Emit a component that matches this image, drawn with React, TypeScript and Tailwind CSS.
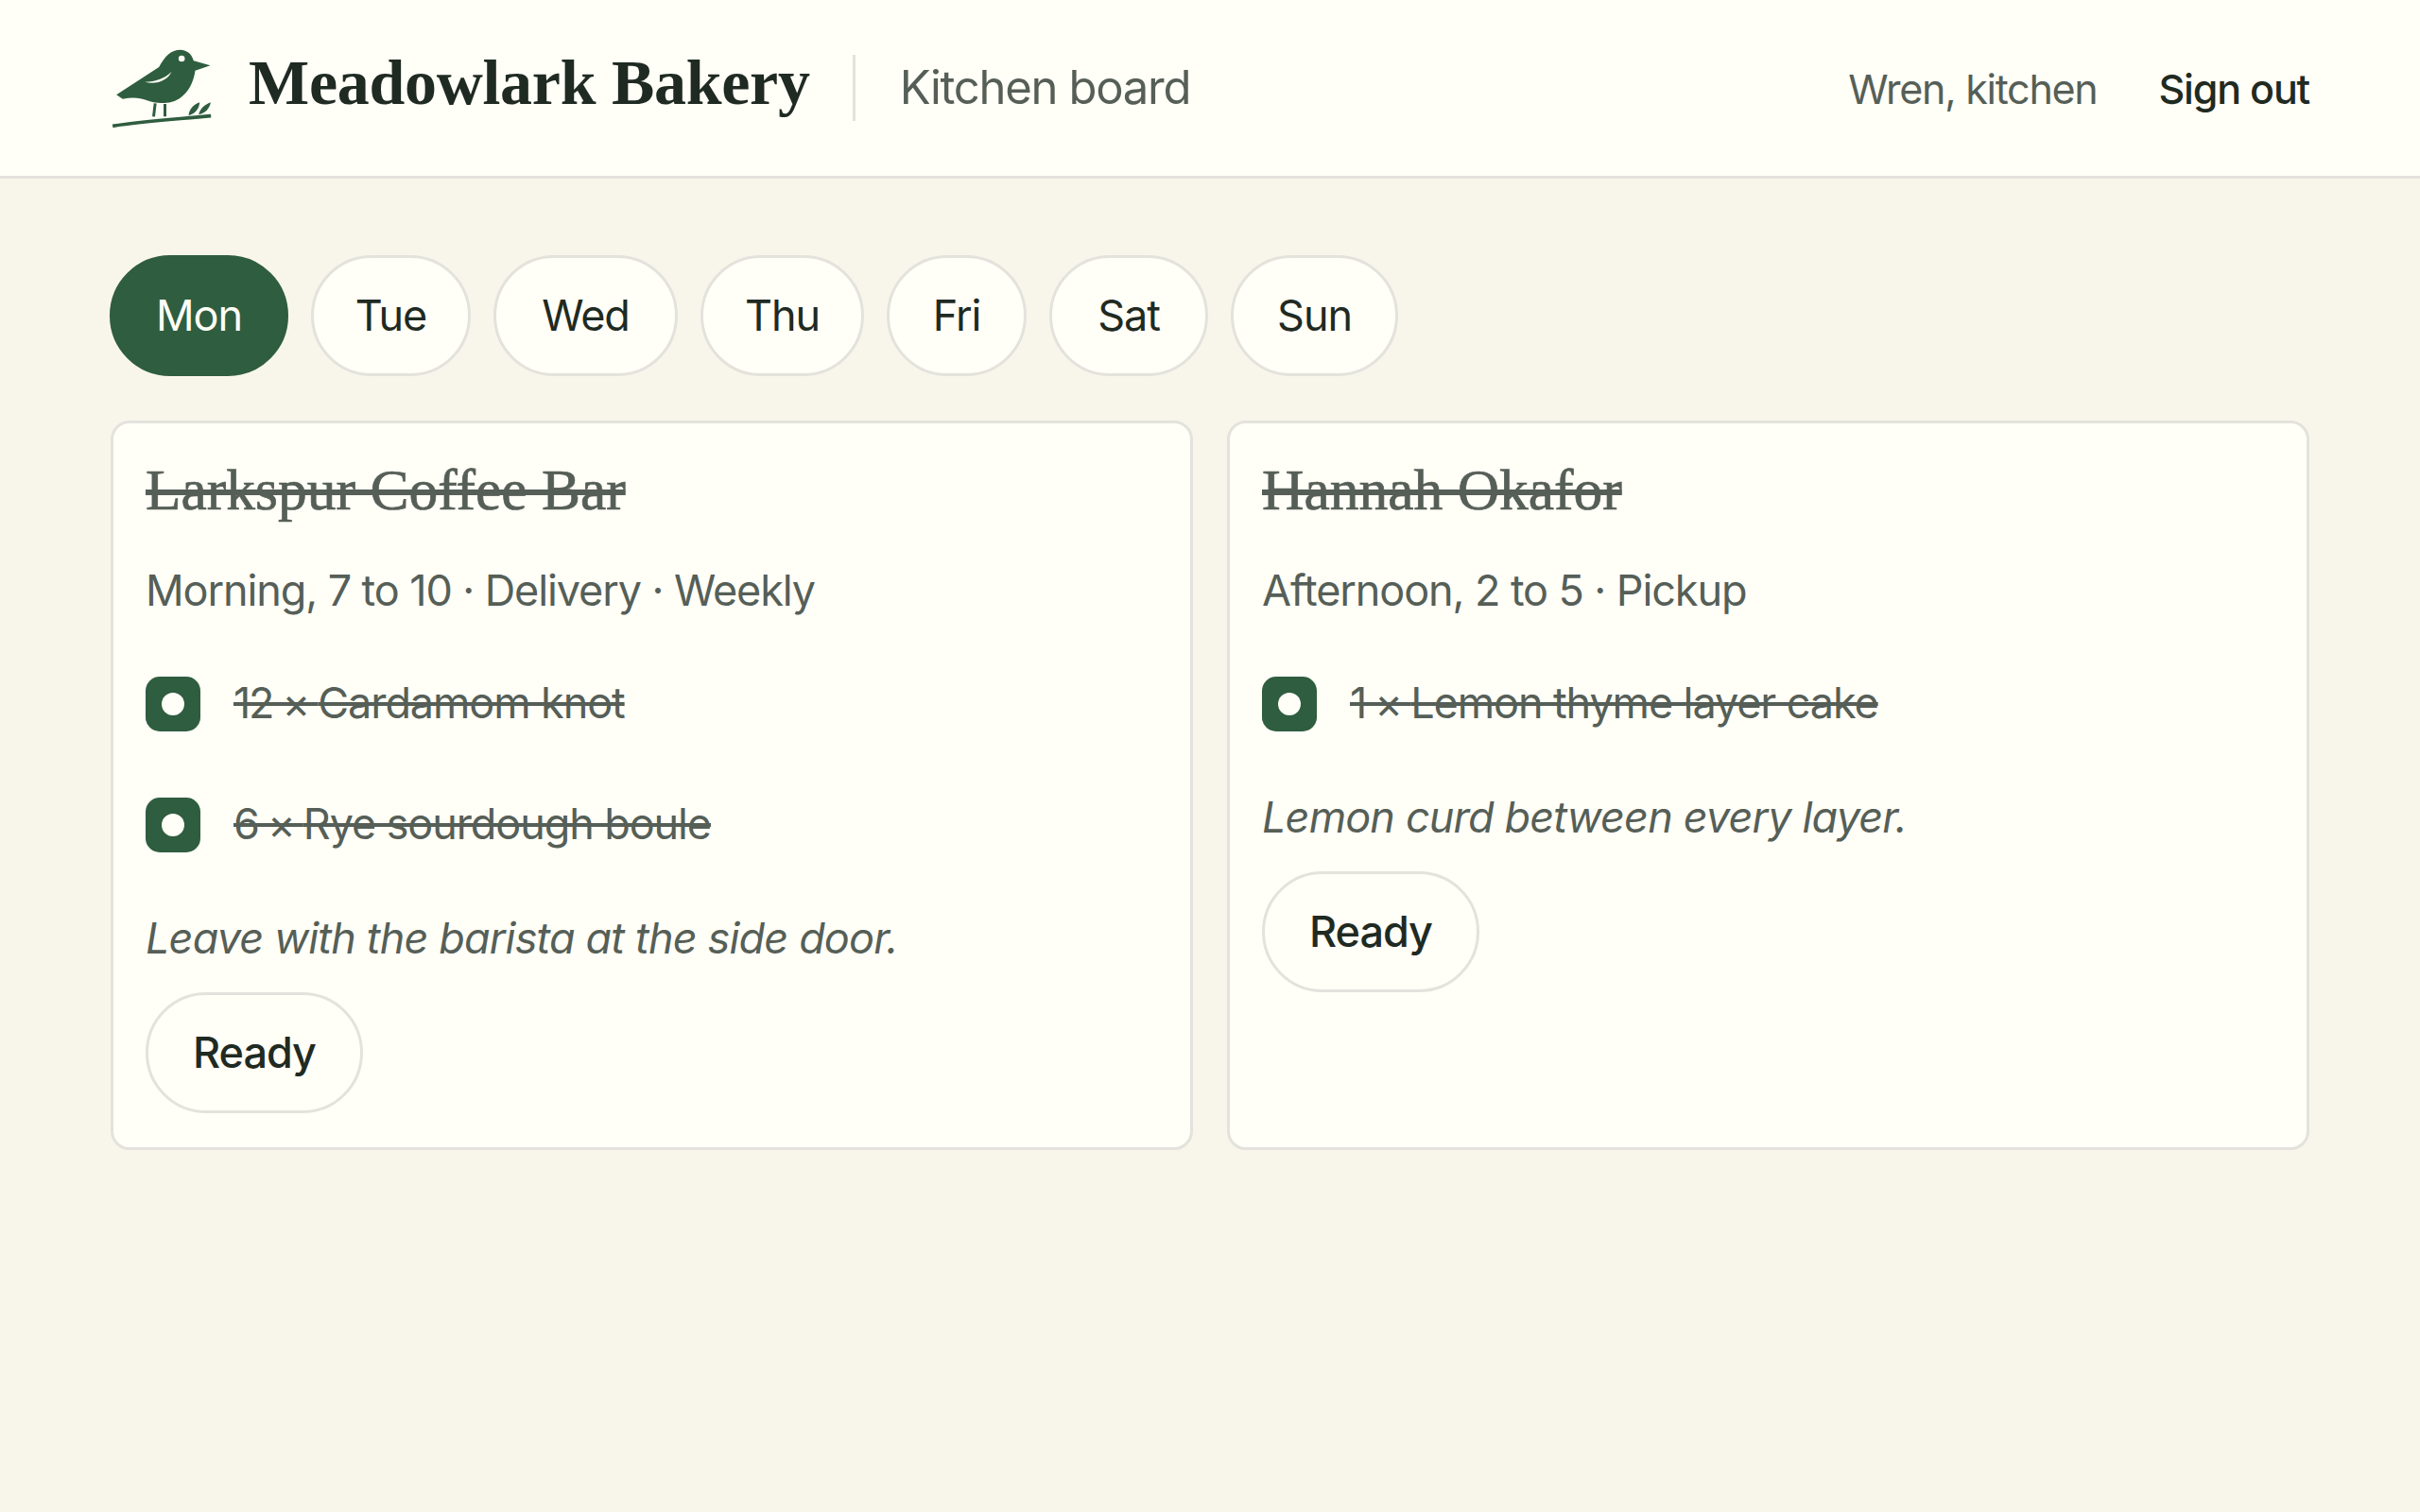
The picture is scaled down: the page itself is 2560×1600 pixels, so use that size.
const days = [
  { label: 'Mon', width: 'w-[189px]' },
  { label: 'Tue', width: 'w-[169px]' },
  { label: 'Wed', width: 'w-[195px]' },
  { label: 'Thu', width: 'w-[173px]' },
  { label: 'Fri', width: 'w-[148px]' },
  { label: 'Sat', width: 'w-[168px]' },
  { label: 'Sun', width: 'w-[177px]' },
];

const orders = [
  {
    name: 'Larkspur Coffee Bar',
    meta: 'Morning, 7 to 10 · Delivery · Weekly',
    items: [
      { qty: '12 × ', name: 'Cardamom knot' },
      { qty: '6 × ', name: 'Rye sourdough boule' },
    ],
    note: 'Leave with the barista at the side door.',
  },
  {
    name: 'Hannah Okafor',
    meta: 'Afternoon, 2 to 5 · Pickup',
    items: [{ qty: '1 × ', name: 'Lemon thyme layer cake' }],
    note: 'Lemon curd between every layer.',
  },
];

function BirdLogo() {
  return (
    <svg viewBox="115 95 320 255" className="ml-px h-[85px] w-[107px] shrink-0">
      <path
        d="M130 243 L265 155 C285 118 305 100 332 100 C355 100 370 115 375 135 L428 150 L380 166 C372 225 335 265 290 268 C265 270 245 268 225 260 C205 252 180 250 150 256 Z"
        fill="#2f5d3f"
      />
      <path d="M220 202 C255 202 285 190 305 170 C292 198 255 212 220 202 Z" fill="#fffef7" />
      <circle cx="337" cy="128" r="10" fill="#fffef7" />
      <path d="M253 270 L248 312 M284 272 L284 312" stroke="#2f5d3f" strokeWidth="9" fill="none" />
      <path d="M118 342 C220 325 330 320 430 310" stroke="#2f5d3f" strokeWidth="11" fill="none" />
      <path d="M359 309 C360 290 374 274 394 267 C393 287 380 303 359 309 Z" fill="#2f5d3f" />
      <path d="M391 306 C395 288 410 274 429 267 C426 287 412 301 391 306 Z" fill="#2f5d3f" />
    </svg>
  );
}

function OrderCard({ order }: { order: (typeof orders)[number] }) {
  return (
    <div className="rounded-[20px] border-[3px] border-[#e3e2dc] bg-[#fffef7] px-[34px] pt-[34px] pb-[36px]">
      <div className="font-['Liberation_Serif',serif] text-[61.5px] leading-[72px] text-[#565f57] line-through [-webkit-text-stroke:0.7px_#565f57]">
        {order.name}
      </div>
      <div className="mt-[37px] text-[45px] leading-[68px] tracking-[-1.1px] text-[#565f57]">{order.meta}</div>
      <div className="mt-[57px] flex flex-col gap-[70px]">
        {order.items.map((item) => (
          <div key={item.name} className="flex h-[58px] items-center gap-[35px]">
            <div className="flex h-[58px] w-[58px] items-center justify-center rounded-[15px] bg-[#2f5d3f]">
              <div className="h-[24px] w-[24px] rounded-full bg-[#fffef7]" />
            </div>
            <span className="mb-[2px] text-[45px] leading-[68px] tracking-[-1.1px] text-[#565f57] line-through">
              <span className="tracking-[-2.3px]">{item.qty}</span>
              {item.name}
            </span>
          </div>
        ))}
      </div>
      <div className="mt-[57px] text-[45px] leading-[68px] tracking-[-0.85px] text-[#565f57] italic">{order.note}</div>
      <button className="mt-[23px] block h-[128px] rounded-full border-[3px] border-[#e3e2dc] bg-[#fffef7] px-[47px] text-[45px] font-medium tracking-[-1px] text-[#1f2a22]">
        Ready
      </button>
    </div>
  );
}

export default function App() {
  return (
    <div className="min-h-[1600px] bg-[#f8f6eb] font-['Inter',sans-serif] text-[#1f2a22]">
      <header className="flex h-[189px] items-center justify-between border-b-[3px] border-[#e3e2dc] bg-[#fffef7] px-[117px]">
        <div className="flex items-center">
          <BirdLogo />
          <div className="mb-[12px] ml-[38px] font-['Liberation_Serif',serif] text-[68px] leading-none font-bold tracking-[-0.3px] text-[#1f2a22]">
            Meadowlark Bakery
          </div>
          <div className="ml-[45px] h-[70px] w-[3px] bg-[#e3e2dc]" />
          <div className="ml-[47px] text-[49px] tracking-[-1.3px] text-[#565f57]">Kitchen board</div>
        </div>
        <div className="flex items-center gap-[65px] pt-[2px]">
          <span className="text-[43px] tracking-[-1.25px] text-[#565f57]">Wren, kitchen</span>
          <span className="text-[43px] font-medium tracking-[-1.2px] text-[#1f2a22]">Sign out</span>
        </div>
      </header>
      <main className="px-[117px] pt-[81px]">
        <div className="-ml-px flex gap-[24px]">
          {days.map((day, i) => (
            <div
              key={day.label}
              className={
                i === 0
                  ? `flex h-[128px] items-center justify-center rounded-full border-[3px] border-[#2f5d3f] bg-[#2f5d3f] text-[45px] tracking-[-1.1px] text-[#fffef7] ${day.width}`
                  : `flex h-[128px] items-center justify-center rounded-full border-[3px] border-[#e3e2dc] bg-[#fffef7] text-[45px] tracking-[-1.1px] text-[#1f2a22] ${day.width}`
              }
            >
              {day.label}
            </div>
          ))}
        </div>
        <div className="mt-[47px] grid grid-cols-2 gap-[36px]">
          {orders.map((order) => (
            <OrderCard key={order.name} order={order} />
          ))}
        </div>
      </main>
    </div>
  );
}
